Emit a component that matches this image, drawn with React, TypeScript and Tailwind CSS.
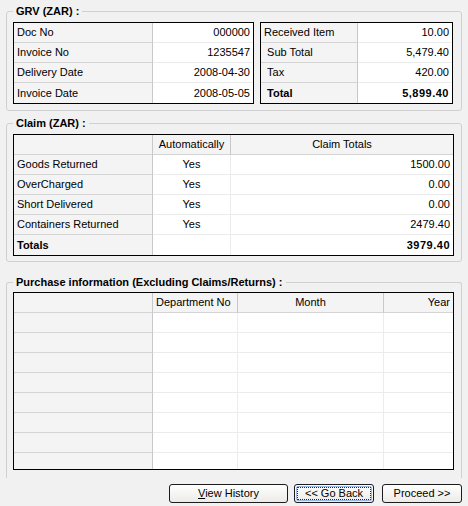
import React from "react";

const LBL = "bg-[#f4f4f4]";
const LBL_LINE = "border-[#d4d4d4]";
const VAL_LINE = "border-[#ececec]";

function Row({ cells, last }: { cells: { text?: React.ReactNode; cls?: string; label?: boolean }[]; last?: boolean }) {
  return (
    <>
      {cells.map((c, i) => (
        <div
          key={i}
          className={`flex items-center h-[20px] px-[3px] whitespace-nowrap overflow-hidden ${
            c.label ? `${LBL} border-r border-r-[#c8c8c8] ${last ? "" : `border-b ${LBL_LINE}`}` : `bg-white ${last ? "" : `border-b ${VAL_LINE}`} ${i < cells.length - 1 ? `border-r border-r-[#ececec]` : ""}`
          } ${last ? "h-[19px]" : ""} ${c.cls ?? ""}`}
        >
          {c.text}
        </div>
      ))}
    </>
  );
}

function HeaderRow({ cells }: { cells: { text?: React.ReactNode; cls?: string }[] }) {
  return (
    <>
      {cells.map((c, i) => (
        <div
          key={i}
          className={`flex items-center h-[20px] px-[3px] whitespace-nowrap ${LBL} border-b border-b-[#d4d4d4] ${
            i < cells.length - 1 ? "border-r border-r-[#c8c8c8]" : ""
          } ${c.cls ?? ""}`}
        >
          {c.text}
        </div>
      ))}
    </>
  );
}

function Group({ title, children, className }: { title: string; children: React.ReactNode; className?: string }) {
  return (
    <fieldset className={`mx-[6px] border border-[#d0d0d0] rounded-[3px] pl-[6px] pr-[7px] ${className ?? ""}`}>
      <legend className="px-[3px] font-bold leading-[14px]">{title}</legend>
      {children}
    </fieldset>
  );
}

function Btn({ children, w, focus }: { children: React.ReactNode; w: string; focus?: boolean }) {
  return (
    <button
      className={`${w} h-[19px] rounded-[3px] border border-[#1c1c1c] bg-gradient-to-b from-white to-[#ecebe6] flex items-center justify-center p-[1px] leading-none`}
    >
      <span
        className={`flex items-center justify-center w-full h-full rounded-[2px] ${
          focus ? "border border-[#9bb7e8] outline outline-1 outline-dotted outline-[#2a2a2a] -outline-offset-2" : ""
        }`}
      >
        {children}
      </span>
    </button>
  );
}

export default function App() {
  const grvLeft = [
    ["Doc No", "000000"],
    ["Invoice No", "1235547"],
    ["Delivery Date", "2008-04-30"],
    ["Invoice Date", "2008-05-05"],
  ];
  const grvRight: [string, string, boolean][] = [
    ["Received Item", "10.00", false],
    ["\u00a0Sub Total", "5,479.40", false],
    ["\u00a0Tax", "420.00", false],
    ["\u00a0Total", "5,899.40", true],
  ];
  const claims = [
    ["Goods Returned", "Yes", "1500.00"],
    ["OverCharged", "Yes", "0.00"],
    ["Short Delivered", "Yes", "0.00"],
    ["Containers Returned", "Yes", "2479.40"],
  ];
  return (
    <div
      className="w-[468px] h-[506px] bg-[#f1f1f1] pt-[4px] text-[11px] text-black overflow-hidden"
      style={{ fontFamily: "Tahoma, 'Liberation Sans', Arial, sans-serif" }}
    >
      <Group title="GRV (ZAR) :" className="pt-[4px] pb-[6px]">
        <div className="flex gap-[6px]">
          <div className="w-[241px] border border-black grid grid-cols-[139px_1fr]">
            {grvLeft.map((r, i) => (
              <Row
                key={i}
                last={i === grvLeft.length - 1}
                cells={[{ text: r[0], label: true }, { text: r[1], cls: "justify-end" }]}
              />
            ))}
          </div>
          <div className="w-[193px] border border-black grid grid-cols-[97px_1fr]">
            {grvRight.map((r, i) => (
              <Row
                key={i}
                last={i === grvRight.length - 1}
                cells={[
                  { text: r[0], label: true, cls: r[2] ? "font-bold" : "" },
                  { text: r[1], cls: `justify-end ${r[2] ? "font-bold tracking-[0.5px]" : ""}` },
                ]}
              />
            ))}
          </div>
        </div>
      </Group>

      <Group title="Claim (ZAR) :" className="mt-[5px] pt-[4px] pb-[5px]">
        <div className="border border-black grid grid-cols-[139px_78px_1fr]">
          <HeaderRow cells={[{}, { text: "Automatically", cls: "justify-center" }, { text: "Claim Totals", cls: "justify-center" }]} />
          {claims.map((r, i) => (
            <Row
              key={i}
              cells={[
                { text: r[0], label: true },
                { text: r[1], cls: "justify-center" },
                { text: r[2], cls: "justify-end" },
              ]}
            />
          ))}
          <Row
            last
            cells={[
              { text: "Totals", label: true, cls: "font-bold" },
              { text: "" },
              { text: "3979.40", cls: "justify-end font-bold tracking-[0.5px]" },
            ]}
          />
        </div>
      </Group>

      <Group title="Purchase information (Excluding Claims/Returns) :" className="mt-[13px] pt-[3px] border-b-0 rounded-b-none h-[203px] pb-0">
        <div className="border border-black grid grid-cols-[139px_85px_146px_1fr] h-[178px] content-start overflow-hidden">
          <HeaderRow
            cells={[{}, { text: "Department No" }, { text: "Month", cls: "justify-center" }, { text: "Year", cls: "justify-end" }]}
          />
          {Array.from({ length: 8 }).map((_, i) => (
            <Row key={i} cells={[{ label: true }, {}, {}, {}]} />
          ))}
        </div>
      </Group>

      <div className="flex justify-end pr-[6px] mt-[6px]">
        <Btn w="w-[119px]">
          <span>
            <span className="underline">V</span>iew History
          </span>
        </Btn>
        <div className="w-[6px]" />
        <Btn w="w-[80px]" focus>
          {"<< Go Back"}
        </Btn>
        <div className="w-[8px]" />
        <Btn w="w-[80px]">{"Proceed >>"}</Btn>
      </div>
    </div>
  );
}
